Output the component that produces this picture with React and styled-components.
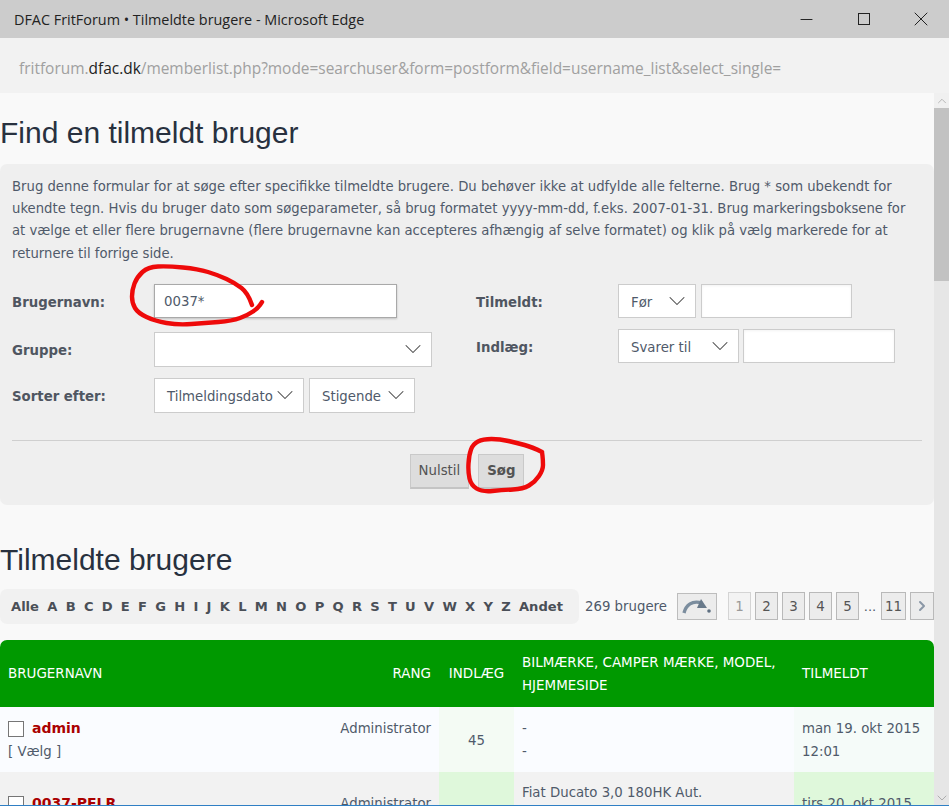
import React from "react";
import styled, { createGlobalStyle } from "styled-components";
import { ChevronDown, ChevronRight, ChevronUp, Minus, X } from "lucide-react";

const Global = createGlobalStyle`
  html, body { margin: 0; padding: 0; height: 100%; overflow: hidden; background: #f9f9f9; }
  * { box-sizing: border-box; }
`;

const Window = styled.div`
  position: relative;
  width: 949px;
  height: 806px;
  overflow: hidden;
  font-family: "DejaVu Sans", Verdana, sans-serif;
  color: #4f5a6a;
  border-bottom: 1px solid #2f7fc4;
`;
const TitleBar = styled.div`
  height: 38px;
  background: #cccccc;
  display: flex;
  align-items: center;
  justify-content: space-between;
  padding-left: 14px;
  font-family: "Open Sans", sans-serif;
  font-size: 14.4px;
  color: #222;
`;
const WinButtons = styled.div`
  display: flex;
  color: #222;
`;
const WinButton = styled.div`
  width: 57px;
  height: 38px;
  display: flex;
  align-items: center;
  justify-content: center;
`;
const MaxIcon = styled.span`
  width: 12px;
  height: 12px;
  border: 1px solid #222;
`;
const AddressBar = styled.div`
  height: 55px;
  background: #f2f2f2;
  padding: 4px 0 0 19px;
  display: flex;
  align-items: center;
  font-family: "Open Sans", sans-serif;
  font-size: 15.45px;
  color: #a0a0a0;
  b { font-weight: 400; color: #222; }
`;
const Viewport = styled.div`
  display: flex;
  height: 712px;
`;
const Page = styled.div`
  width: 934px;
  height: 712px;
  overflow: hidden;
`;
const Scrollbar = styled.div`
  width: 15px;
  background: #e6e6e6;
  display: flex;
  flex-direction: column;
  justify-content: space-between;
  align-items: center;
  color: #8f8f8f;
`;
const ScrollTop = styled.div`
  height: 15px;
  background: #f0f0f0;
  width: 100%;
  display: flex;
  align-items: center;
  justify-content: center;
`;
const ScrollThumb = styled.div`
  width: 100%;
  height: 173px;
  background: #c2c2c2;
  margin-bottom: auto;
`;
const ScrollBottom = styled.div`
  height: 15px;
  display: flex;
  align-items: center;
  justify-content: center;
`;
const Heading = styled.h2`
  margin: ${p => p.$top}px 0 0;
  height: 40px;
  line-height: 40px;
  font-family: "Liberation Sans", Arial, sans-serif;
  font-weight: 400;
  font-size: 30px;
  color: #28313f;
`;
const Panel = styled.div`
  margin-top: 11px;
  height: 341px;
  background: #efefef;
  border-radius: 7px;
  padding: 12px 12px 0;
`;
const Intro = styled.p`
  margin: 0;
  font-size: 13.22px;
  line-height: 22.2px;
  width: 900px;
`;
const FormGrid = styled.div`
  display: grid;
  grid-template-columns: 464px 1fr;
  margin-top: 19px;
  height: 140px;
`;
const FormCol = styled.div`
  display: flex;
  flex-direction: column;
`;
const FormRow = styled.div`
  display: flex;
  align-items: center;
  height: ${p => p.$h}px;
  margin-bottom: ${p => p.$gap}px;
`;
const Label = styled.div`
  width: 142px;
  padding-top: ${p => p.$dy}px;
  font-weight: 700;
  font-size: 13.3px;
  color: #4f5661;
  flex: none;
`;
const Input = styled.div`
  width: ${p => p.$w}px;
  height: 34px;
  background: #fff;
  border: 1px solid ${p => (p.$dark ? "#a9a9a9" : "#cccccc")};
  box-shadow: ${p => (p.$dark ? "0 1px 2px rgba(0,0,0,.2)" : "inset 0 1px 3px rgba(0,0,0,.05)")};
  margin-left: ${p => p.$ml || 0}px;
  padding: 2px 0 0 9px;
  display: flex;
  align-items: center;
  font-size: 13.3px;
`;
const Select = styled.div`
  width: ${p => p.$w}px;
  height: ${p => p.$h || 35}px;
  background: #fff;
  border: 1px solid #cccccc;
  margin-left: ${p => p.$ml || 0}px;
  padding: 0 4px 0 12px;
  display: flex;
  align-items: center;
  justify-content: space-between;
  font-size: 13.3px;
  white-space: nowrap;
  svg { flex: none; color: #444; margin-left: -8px; }
`;
const SelectText = styled.span`
  padding-top: ${p => p.$dy || 2}px;
`;
const Rule = styled.div`
  height: 1px;
  background: #cfcfcf;
  margin: 16px 0 0;
  width: 910px;
`;
const Buttons = styled.div`
  display: flex;
  justify-content: center;
  gap: 9px;
  margin-top: 13px;
`;
const Button = styled.div`
  height: 35px;
  padding: 0 8px;
  display: flex;
  align-items: center;
  background: #dddddd;
  border: 1px solid #c9c9c9;
  border-bottom: 2px solid #c4c4c4;
  font-size: 13.3px;
  font-weight: ${p => (p.$bold ? 700 : 400)};
  color: #535353;
`;
const ListBar = styled.div`
  display: flex;
  align-items: center;
  margin-top: 8px;
  height: 36px;
`;
const Letters = styled.div`
  width: 579px;
  height: 35px;
  background: #f1f1f1;
  border-radius: 7px;
  padding: 1px 0 0 11px;
  display: flex;
  align-items: center;
  gap: 8.26px;
  font-size: 13.1px;
  font-weight: 700;
  color: #4a4f57;
  white-space: nowrap;
`;
const Count = styled.div`
  margin-left: 6px;
  font-size: 13.3px;
  width: 92px;
  white-space: nowrap;
`;
const JumpBox = styled.div`
  width: 40px;
  height: 27px;
  background: #ececec;
  border: 1px solid #bdbdbd;
  display: flex;
  margin-right: 11px;
`;
const PageBox = styled.div`
  width: ${p => p.$w || 23}px;
  height: 28px;
  background: ${p => (p.$active ? "#f3f3f3" : "#ececec")};
  border: 1px solid ${p => (p.$active ? "#d4d4d4" : "#b9b9b9")};
  color: ${p => (p.$active ? "#9a9a9a" : "#555")};
  display: flex;
  align-items: center;
  justify-content: center;
  font-size: 13.4px;
  margin-right: ${p => p.$mr ?? 4}px;
`;
const Dots = styled.div`
  width: 22px;
  text-align: center;
  font-size: 13px;
`;
const Table = styled.table`
  margin-top: 16px;
  width: 934px;
  table-layout: fixed;
  border-collapse: collapse;
`;
const HeadCell = styled.th`
  background: #009900;
  color: #fff;
  font-weight: 400;
  font-size: 13.45px;
  line-height: 22.5px;
  height: 67px;
  padding: 2px 8px 0;
  text-align: ${p => p.$align || "left"};
  &:first-child { border-top-left-radius: 7px; }
  &:last-child { border-top-right-radius: 7px; }
`;
const Row = styled.tr`
  background: ${p => (p.$alt ? "#f2f2f2" : "#fafcff")};
`;
const Cell = styled.td`
  height: 65px;
  padding: ${p => p.$pad ?? 10}px 8px 9px;
  vertical-align: ${p => p.$valign || "top"};
  font-size: 13.3px;
  line-height: 23px;
  text-align: ${p => p.$align || "left"};
  background: ${p => p.$tint || "transparent"};
`;
const NameLine = styled.div`
  display: flex;
  align-items: center;
  gap: 8px;
`;
const Check = styled.span`
  width: 16px;
  height: 16px;
  border: 1px solid #767676;
  background: #fff;
  flex: none;
`;
const UserLink = styled.a`
  color: #aa0000;
  font-weight: 700;
  font-size: 14px;
`;
const Scribble = styled.svg`
  position: absolute;
  left: 0;
  top: 0;
  pointer-events: none;
`;

const letters = "A B C D E F G H I J K L M N O P Q R S T U V W X Y Z".split(" ");

const nameStroke = [
  [252, 305], [248, 293], [235, 283], [218, 275], [198, 269], [168, 266], [148, 267], [137, 277],
  [132, 290], [132, 303], [138, 313], [155, 321], [178, 325], [205, 323], [232, 321], [248, 315],
  [258, 308], [262, 302],
];
const searchStroke = [
  [542, 452], [532, 447], [517, 443], [500, 439], [483, 439], [473, 444], [469, 455], [468, 472],
  [471, 485], [482, 492], [503, 490], [523, 489], [535, 482], [543, 470], [543, 460], [542, 452],
];

// smooth line through the midpoints of a hand drawn stroke
const smooth = pts => {
  let d = `M${pts[0][0]} ${pts[0][1]}`;
  for (let i = 1; i < pts.length - 1; i++) {
    const mx = (pts[i][0] + pts[i + 1][0]) / 2;
    const my = (pts[i][1] + pts[i + 1][1]) / 2;
    d += ` Q${pts[i][0]} ${pts[i][1]} ${mx} ${my}`;
  }
  const last = pts[pts.length - 1];
  return `${d} L${last[0]} ${last[1]}`;
};

const Jump = () => (
  <svg width="38" height="25" viewBox="0 0 38 25">
    <path d="M6 19 C8 11 14 6 24 9" fill="none" stroke="#7b8d9e" strokeWidth="3.4" />
    <path d="M23 5 L29 14 L19 14 Z" fill="#68798a" />
    <circle cx="31" cy="17" r="1.8" fill="#5f7082" />
  </svg>
);

const Chevron = () => <ChevronDown size={28} strokeWidth={0.9} />;

const App = () => (
  <Window>
    <Global />
    <TitleBar>
      DFAC FritForum • Tilmeldte brugere - Microsoft Edge
      <WinButtons>
        <WinButton><Minus size={19} strokeWidth={1.25} /></WinButton>
        <WinButton><MaxIcon /></WinButton>
        <WinButton><X size={24} strokeWidth={1} /></WinButton>
      </WinButtons>
    </TitleBar>
    <AddressBar>
      fritforum.<b>dfac.dk</b>/memberlist.php?mode=searchuser&amp;form=postform&amp;field=username_list&amp;select_single=
    </AddressBar>
    <Viewport>
      <Page>
        <Heading $top={20}>Find en tilmeldt bruger</Heading>
        <Panel>
          <Intro>
            Brug denne formular for at søge efter specifikke tilmeldte brugere. Du behøver ikke at udfylde alle felterne. Brug * som ubekendt for ukendte tegn. Hvis du bruger dato som søgeparameter, så brug formatet yyyy-mm-dd, f.eks. 2007-01-31. Brug markeringsboksene for at vælge et eller flere brugernavne (flere brugernavne kan accepteres afhængig af selve formatet) og klik på vælg markerede for at returnere til forrige side.
          </Intro>
          <FormGrid>
            <FormCol>
              <FormRow $h={34} $gap={14}>
                <Label $dy={3}>Brugernavn:</Label>
                <Input $w={243} $dark>0037*</Input>
              </FormRow>
              <FormRow $h={35} $gap={11}>
                <Label $dy={2}>Gruppe:</Label>
                <Select $w={278}><span /><Chevron /></Select>
              </FormRow>
              <FormRow $h={35} $gap={0}>
                <Label $dy={2}>Sorter efter:</Label>
                <Select $w={150}><SelectText>Tilmeldingsdato</SelectText><Chevron /></Select>
                <Select $w={106} $ml={5}><SelectText>Stigende</SelectText><Chevron /></Select>
              </FormRow>
            </FormCol>
            <FormCol>
              <FormRow $h={34} $gap={11}>
                <Label $dy={4}>Tilmeldt:</Label>
                <Select $w={78} $h={34}><SelectText $dy={4}>Før</SelectText><Chevron /></Select>
                <Input $w={151} $ml={5} />
              </FormRow>
              <FormRow $h={34} $gap={0}>
                <Label $dy={4}>Indlæg:</Label>
                <Select $w={121} $h={34}><SelectText $dy={4}>Svarer til</SelectText><Chevron /></Select>
                <Input $w={152} $ml={4} />
              </FormRow>
            </FormCol>
          </FormGrid>
          <Rule />
          <Buttons>
            <Button>Nulstil</Button>
            <Button $bold>Søg</Button>
          </Buttons>
        </Panel>
        <Heading $top={35}>Tilmeldte brugere</Heading>
        <ListBar>
          <Letters>
            <span>Alle</span>
            {letters.map(l => <span key={l}>{l}</span>)}
            <span>Andet</span>
          </Letters>
          <Count>269 brugere</Count>
          <JumpBox><Jump /></JumpBox>
          <PageBox $active>1</PageBox>
          <PageBox>2</PageBox>
          <PageBox>3</PageBox>
          <PageBox>4</PageBox>
          <PageBox $mr={0}>5</PageBox>
          <Dots>...</Dots>
          <PageBox $w={25}>11</PageBox>
          <PageBox $w={24} $mr={0}><ChevronRight size={16} strokeWidth={3} color="#8a97a6" /></PageBox>
        </ListBar>
        <Table>
          <colgroup>
            <col style={{ width: 325 }} />
            <col style={{ width: 114 }} />
            <col style={{ width: 75 }} />
            <col style={{ width: 280 }} />
            <col style={{ width: 140 }} />
          </colgroup>
          <thead>
            <tr>
              <HeadCell>BRUGERNAVN</HeadCell>
              <HeadCell $align="right">RANG</HeadCell>
              <HeadCell $align="center">INDLÆG</HeadCell>
              <HeadCell>BILMÆRKE, CAMPER MÆRKE, MODEL, HJEMMESIDE</HeadCell>
              <HeadCell>TILMELDT</HeadCell>
            </tr>
          </thead>
          <tbody>
            <Row>
              <Cell>
                <NameLine><Check /><UserLink>admin</UserLink></NameLine>
                [ Vælg ]
              </Cell>
              <Cell $align="right">Administrator</Cell>
              <Cell $align="center" $valign="middle" $tint="#f4fbf4">45</Cell>
              <Cell>-<br />-</Cell>
              <Cell $tint="#f5fbf9">man 19. okt 2015 12:01</Cell>
            </Row>
            <Row $alt>
              <Cell $pad={20}>
                <NameLine><Check /><UserLink>0037-PELR</UserLink></NameLine>
              </Cell>
              <Cell $pad={20} $align="right">Administrator</Cell>
              <Cell $tint="#dff8db" />
              <Cell $pad={9}>Fiat Ducato 3,0 180HK Aut.<br />-<br />-</Cell>
              <Cell $pad={20} $tint="#dff8db">tirs 20. okt 2015</Cell>
            </Row>
          </tbody>
        </Table>
      </Page>
      <Scrollbar>
        <ScrollTop><ChevronUp size={14} strokeWidth={1} /></ScrollTop>
        <ScrollThumb />
        <ScrollBottom><ChevronDown size={16} strokeWidth={1} /></ScrollBottom>
      </Scrollbar>
    </Viewport>
    <Scribble width="949" height="806" viewBox="0 0 949 806">
      <path d={smooth(nameStroke)} fill="none" stroke="#ee0a0a" strokeWidth="4.4" strokeLinecap="round" />
      <path d={smooth(searchStroke)} fill="none" stroke="#ee0a0a" strokeWidth="4.4" strokeLinecap="round" />
    </Scribble>
  </Window>
);

export default App;
